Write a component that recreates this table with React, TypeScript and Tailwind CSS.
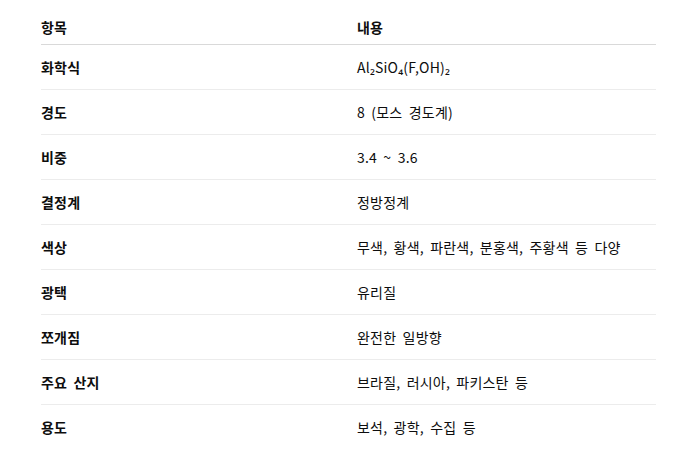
const rows: [string, string][] = [
  ['화학식', 'Al₂SiO₄(F,OH)₂'],
  ['경도', '8 (모스 경도계)'],
  ['비중', '3.4 ~ 3.6'],
  ['결정계', '정방정계'],
  ['색상', '무색, 황색, 파란색, 분홍색, 주황색 등 다양'],
  ['광택', '유리질'],
  ['쪼개짐', '완전한 일방향'],
  ['주요 산지', '브라질, 러시아, 파키스탄 등'],
  ['용도', '보석, 광학, 수집 등'],
]

export default function App() {
  return (
    <div
      className="w-[697px] h-[456px] bg-white pl-[41px] pr-[41px] pt-[10px] text-[14px] text-[#0d0d0d] [word-spacing:3px] tracking-[0.2px]"
      style={{ fontFamily: '"Noto Sans CJK KR", "Noto Sans", sans-serif' }}
    >
      {/* header */}
      <div className="grid grid-cols-[316px_1fr] h-[35px] items-center border-b border-[#d9d9d9] font-bold">
        <div>항목</div>
        <div>내용</div>
      </div>

      {rows.map(([k, v], i) => (
        <div
          key={k}
          className={`grid grid-cols-[316px_1fr] h-[45px] items-center ${
            i < rows.length - 1 ? 'border-b border-[#ececec]' : ''
          }`}
        >
          <div className="font-bold">{k}</div>
          <div>{v}</div>
        </div>
      ))}
    </div>
  )
}
